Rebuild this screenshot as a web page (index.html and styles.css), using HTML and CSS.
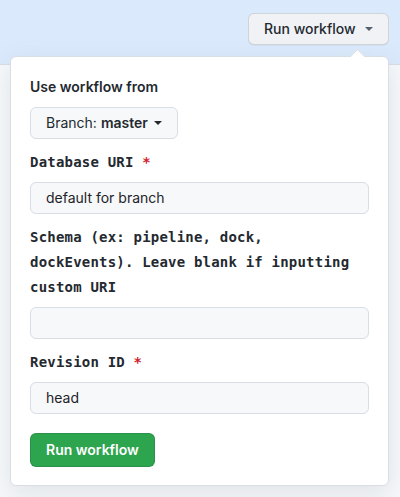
FILE: index.html
```html
<!DOCTYPE html>
<html lang="en">
<head>
<meta charset="utf-8">
<title>Run workflow</title>
<link rel="stylesheet" href="styles.css">
</head>
<body>
<header class="bar">
  <button class="btn btn-top" type="button">Run workflow <span class="caret"></span></button>
</header>
<div class="popup">
  <div class="popup-arrow"></div>
  <div class="title">Use workflow from</div>
  <button class="btn btn-branch" type="button">Branch: <b>master</b> <span class="caret"></span></button>
  <div class="group">
    <label class="label">Database URI <span class="req">*</span></label>
    <div class="input">default for branch</div>
  </div>
  <div class="group">
    <label class="label">Schema (ex: pipeline, dock, dockEvents). Leave blank if inputting custom URI</label>
    <div class="input"></div>
  </div>
  <div class="group">
    <label class="label">Revision ID <span class="req">*</span></label>
    <div class="input">head</div>
  </div>
  <button class="btn btn-primary" type="button">Run workflow</button>
</div>
</body>
</html>
```

FILE: styles.css
```css
* { box-sizing: border-box; }
html, body { margin: 0; }
body {
  width: 400px;
  height: 497px;
  background: #f6f8fa;
  font-family: Inter, "Liberation Sans", sans-serif;
  font-size: 14px;
  color: #1f2328;
  position: relative;
  overflow: hidden;
}
.bar {
  height: 65px;
  background: #dae9fb;
  border-bottom: 1px solid #d6dde5;
  display: flex;
  justify-content: flex-end;
  align-items: flex-start;
  padding: 13px 11px 0 0;
}
.btn {
  font-family: inherit;
  font-size: 14px;
  line-height: 20px;
  border-radius: 6px;
  border: 1px solid rgba(31, 35, 40, 0.15);
  display: inline-flex;
  align-items: center;
  cursor: pointer;
}
.btn-top {
  height: 32px;
  width: 141px;
  padding: 0 0 0 15px;
  background: #f0f2f5;
  color: #24292f;
  font-weight: 500;
  box-shadow: 0 1px 0 rgba(31,35,40,0.04);
}
.caret {
  display: inline-block;
  width: 0;
  height: 0;
  border-left: 4px solid transparent;
  border-right: 4px solid transparent;
  border-top: 4px solid #57606a;
  margin-left: 8px;
}
.btn-top .caret { margin-left: 9px; }
.popup {
  position: absolute;
  left: 10px;
  top: 56px;
  width: 379px;
  background: #fff;
  border: 1px solid #d8dee4;
  border-radius: 6px;
  padding: 19px 19px 18px 19px;
  box-shadow: 0 8px 24px rgba(140, 149, 159, 0.2);
}
.popup-arrow {
  position: absolute;
  top: -6px;
  left: 341px;
  width: 11px;
  height: 11px;
  background: #fff;
  border-left: 1px solid #d8dee4;
  border-top: 1px solid #d8dee4;
  transform: rotate(45deg);
}
.title {
  font-weight: 600;
  line-height: 21px;
  margin-bottom: 10px;
  color: #24292f;
}
.btn-branch {
  height: 32px;
  padding: 0 15px;
  background: #f6f8fa;
  color: #24292f;
  border-color: #d8dee4;
  margin-bottom: 11px;
}
.btn-branch b { font-weight: 600; margin-left: 4px; }
.btn-branch .caret { border-top-color: #24292f; margin-left: 6px; }
.group { margin-bottom: 11px; }
.label {
  display: block;
  font-family: "DejaVu Sans Mono", "Liberation Mono", monospace;
  font-weight: 700;
  font-size: 14px;
  letter-spacing: 0.2px;
  line-height: 25px;
  color: #24292f;
  margin-bottom: 7px;
}
.req { color: #cf222e; }
.input {
  height: 32px;
  border: 1px solid #d8dee4;
  border-radius: 6px;
  background: #f6f8fa;
  padding: 0 15px;
  line-height: 30px;
  color: #1f2328;
}
.group:last-of-type { margin-bottom: 19px; }
.btn-primary {
  height: 34px;
  padding: 0 15px;
  background: #2da44e;
  color: #fff;
  font-weight: 600;
  border-color: rgba(31, 35, 40, 0.15);
}
```
